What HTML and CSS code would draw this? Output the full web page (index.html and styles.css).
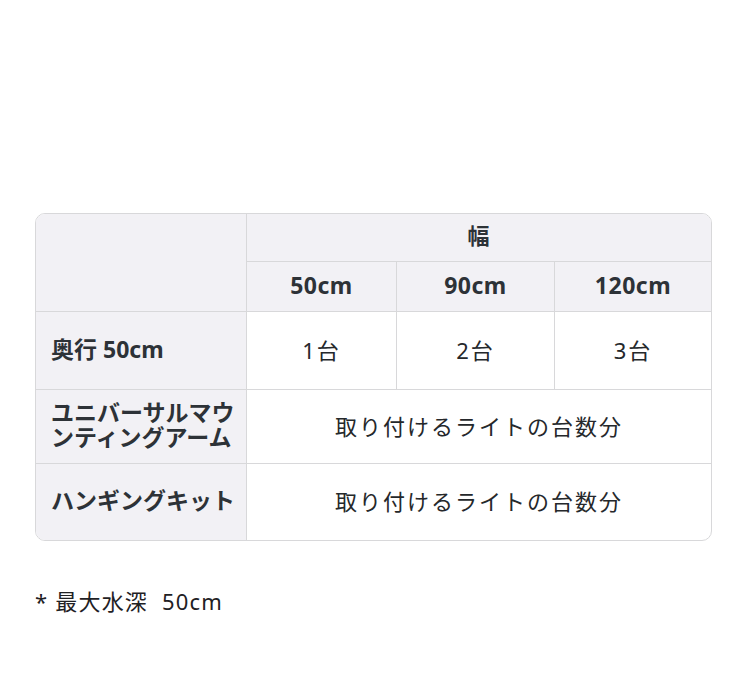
FILE: index.html
```html
<!DOCTYPE html>
<html lang="ja">
<head>
<meta charset="utf-8">
<link rel="stylesheet" href="styles.css">
</head>
<body>
<div class="page">
  <div class="table-wrap">
    <table class="spec">
      <colgroup>
        <col class="c1"><col class="c2"><col class="c3"><col class="c4">
      </colgroup>
      <tr class="r1">
        <th class="head corner" rowspan="2"></th>
        <th class="head last" colspan="3">幅</th>
      </tr>
      <tr class="r2">
        <th class="head size">50cm</th>
        <th class="head size">90cm</th>
        <th class="head size last">120cm</th>
      </tr>
      <tr class="r3">
        <th class="side">奥行 50cm</th>
        <td>1台</td>
        <td>2台</td>
        <td class="last">3台</td>
      </tr>
      <tr class="r4">
        <th class="side">ユニバーサルマウンティングアーム</th>
        <td colspan="3" class="last">取り付けるライトの台数分</td>
      </tr>
      <tr class="r5">
        <th class="side bottom">ハンギングキット</th>
        <td colspan="3" class="last bottom">取り付けるライトの台数分</td>
      </tr>
    </table>
  </div>
  <p class="note">* 最大水深&nbsp;&nbsp;50cm</p>
</div>
</body>
</html>
```

FILE: styles.css
```css
html, body {
  margin: 0;
  padding: 0;
  background: #ffffff;
}
body {
  font-family: "Noto Sans", "Noto Sans CJK JP", sans-serif;
  color: #2d3237;
}
.page {
  padding: 213px 0 0 35px;
}
.table-wrap {
  width: 675px;
  border: 1px solid #d8d8da;
  border-radius: 10px;
  overflow: hidden;
}
.spec {
  width: 675px;
  table-layout: fixed;
  border-collapse: separate;
  border-spacing: 0;
}
.c1 { width: 211px; }
.c2 { width: 150px; }
.c3 { width: 158px; }
.c4 { width: 156px; }
.spec th, .spec td {
  padding: 0 15px 4px;
  border-right: 1px solid #d8d8da;
  border-bottom: 1px solid #d8d8da;
  font-size: 22px;
  letter-spacing: 1px;
  vertical-align: middle;
  box-sizing: border-box;
}
.spec .last { border-right: none; }
.spec .bottom { border-bottom: none; }
.head {
  background: #f2f1f5;
  font-weight: 700;
  text-align: center;
}
.spec .head { padding-bottom: 7px; }
.spec .size {
  padding-bottom: 3px;
  font-size: 23px;
  letter-spacing: 0.5px;
}
.spec .side {
  background: #f2f1f5;
  font-weight: 700;
  text-align: left;
  font-size: 23px;
  letter-spacing: 0;
  line-height: 25px;
  padding: 0 8px 3px 15px;
}
.spec td {
  text-align: center;
  font-weight: 400;
  color: #25282b;
  letter-spacing: 2px;
}
.r1 { height: 48px; }
.r2 { height: 50px; }
.r3 { height: 78px; }
.r4 { height: 74px; }
.r5 { height: 76px; }
.note {
  margin: 45px 0 0 0;
  font-size: 22px;
  line-height: 30px;
  color: #1f2124;
  letter-spacing: 1.2px;
}
```
